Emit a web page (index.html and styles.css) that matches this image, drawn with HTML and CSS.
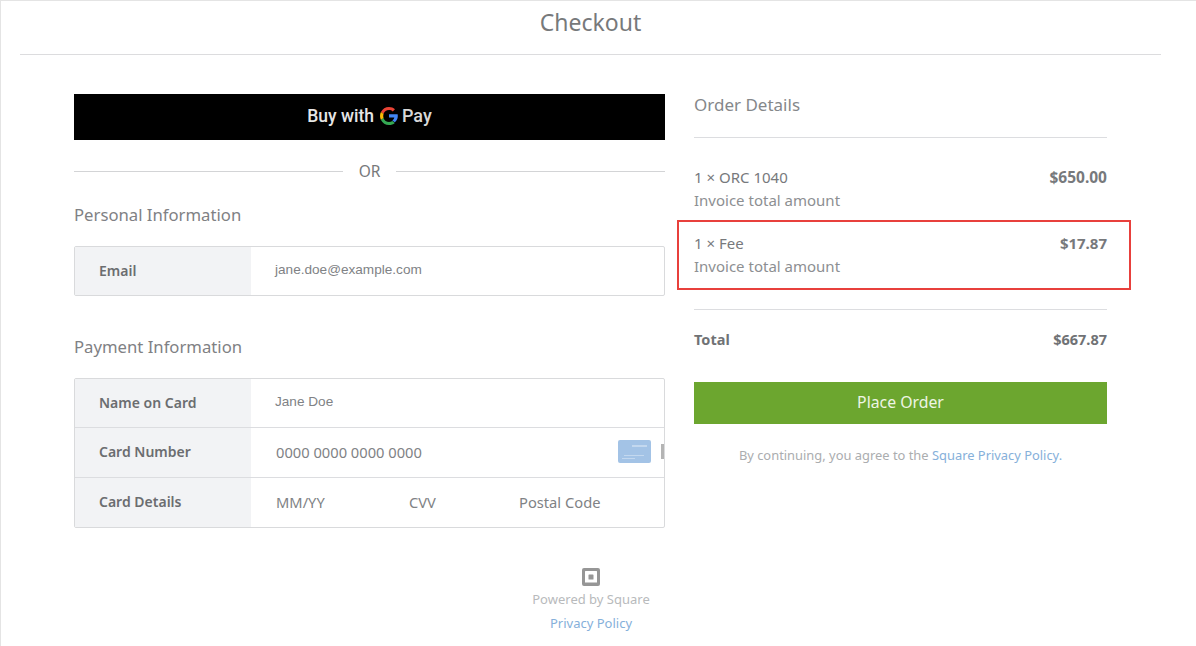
FILE: index.html
```html
<!DOCTYPE html>
<html lang="en">
<head>
<meta charset="utf-8">
<title>Checkout</title>
<link rel="stylesheet" href="styles.css">
</head>
<body>
<div class="page">
  <header class="header"><h1 class="title">Checkout</h1></header>
  <main class="columns">
    <section class="left">
      <button class="gpay">Buy with
        <svg class="g-logo" viewBox="2 2 44 44" width="18" height="18" aria-hidden="true">
          <path fill="#EA4335" d="M24 9.500c3.500 0 6.700 1.200 9.200 3.600l5.400-5.400C34.700 4 29.800 2 24 2 15.400 2 8 6.900 4.400 14.100l6.300 4.900C12.500 13.400 17.800 9.500 24 9.500z"/>
          <path fill="#4285F4" d="M45.500 24.500c0-1.600-.1-3.100-.4-4.500H24v7.500h12.900c-.6 3-2.200 5.500-4.700 7.200l6 4.700C42.800 35.500 45.500 30.500 45.500 24.500z"/>
          <path fill="#FBBC05" d="M10.700 28.600c-.5-1.400-.8-3-.8-4.600s.3-3.200.8-4.600l-6.300-4.900C2.900 17.400 2 20.600 2 24s.9 6.600 2.400 9.500l6.300-4.900z"/>
          <path fill="#34A853" d="M24 46c5.800 0 10.400-1.900 14.200-5.100l-6-4.700c-2.200 1.500-4.900 2.300-8.200 2.300-6.200 0-11.500-4-13.300-9.900l-6.300 4.900C8 41.100 15.400 46 24 46z"/>
        </svg>
        <span class="pay">Pay</span>
      </button>
      <div class="or"><span class="or-line"></span><span class="or-text">OR</span><span class="or-line"></span></div>

      <h2 class="section-title first">Personal Information</h2>
      <div class="table">
        <div class="row">
          <div class="label">Email</div>
          <div class="value small">jane.doe@example.com</div>
        </div>
      </div>

      <h2 class="section-title second">Payment Information</h2>
      <div class="table">
        <div class="row">
          <div class="label">Name on Card</div>
          <div class="value small">Jane Doe</div>
        </div>
        <div class="row">
          <div class="label">Card Number</div>
          <div class="value number">
            <span>0000 0000 0000 0000</span>
            <span class="card-icon"></span>
            <span class="card-peek"></span>
          </div>
        </div>
        <div class="row">
          <div class="label">Card Details</div>
          <div class="value details">
            <span class="mm">MM/YY</span>
            <span class="cvv">CVV</span>
            <span>Postal Code</span>
          </div>
        </div>
      </div>
    </section>

    <aside class="right">
      <h2 class="order-title">Order Details</h2>
      <div class="item first-item">
        <div class="item-line"><span>1 × ORC 1040</span><b>$650.00</b></div>
        <div class="item-sub">Invoice total amount</div>
      </div>
      <div class="item fee">
        <div class="item-line"><span>1 × Fee</span><b>$17.87</b></div>
        <div class="item-sub">Invoice total amount</div>
        <div class="highlight"></div>
      </div>
      <div class="total"><b>Total</b><b>$667.87</b></div>
      <button class="place">Place Order</button>
      <p class="agree">By continuing, you agree to the <a class="link">Square Privacy Policy.</a></p>
    </aside>
  </main>
  <footer class="footer">
    <svg class="sq-logo" viewBox="0 0 20 20" width="20" height="20" aria-hidden="true">
      <path fill="#969696" fill-rule="evenodd" d="M3 1h14a2 2 0 0 1 2 2v14a2 2 0 0 1-2 2H3a2 2 0 0 1-2-2V3a2 2 0 0 1 2-2zm1 3.500v11h12v-11a.5.5 0 0 0-.5-.5h-11a.5.5 0 0 0-.5.5z"/>
      <rect x="7.500" y="7.500" width="5" height="5" rx=".6" fill="#969696"/>
    </svg>
    <div class="powered">Powered by Square</div>
    <a class="link privacy">Privacy Policy</a>
  </footer>
</div>
</body>
</html>
```
FILE: styles.css
```css
* { box-sizing: border-box; }
html, body { margin: 0; padding: 0; }
body {
  width: 1196px;
  height: 646px;
  overflow: hidden;
  background: #fff;
  font-family: "Noto Sans", "Open Sans", sans-serif;
  color: #6f7173;
}
.page {
  height: 646px;
  border-left: 1px solid #e4e4e4;
  border-top: 1px solid #e4e4e4;
  display: flex;
  flex-direction: column;
}
.header {
  margin: 0 35px 0 19px;
  height: 54px;
  border-bottom: 1px solid #dcdcde;
  text-align: center;
}
.title {
  margin: 0;
  padding-top: 5px;
  font-size: 23px;
  line-height: 33px;
  font-weight: 400;
  color: #77797b;
}
.columns {
  display: flex;
  padding: 39px 0 0 73px;
  gap: 29px;
}
.left { width: 591px; }
.right { width: 413px; }
.gpay {
  display: flex;
  align-items: center;
  justify-content: center;
  width: 100%;
  height: 46px;
  border: 0;
  background: #000;
  color: #e6e6e6;
  font: 500 17.500px "Roboto", sans-serif;
  padding: 0 0 3px;
}
.g-logo { margin: 0 4px 0 6px; }
.pay { font-size: 18px; color: #d8d8d8; }
.or {
  display: flex;
  align-items: center;
  gap: 16px;
  height: 62px;
  padding-bottom: 1px;
}
.or-line { flex: 1; height: 1px; background: #d3d4d6; margin-top: 1px; }
.or-text { font-size: 15.500px; color: #77797b; }
.section-title {
  margin: 0;
  font-size: 16.700px;
  line-height: 24px;
  font-weight: 400;
  color: #7f8184;
}
.first { margin-top: 1px; margin-bottom: 19px; }
.second { margin-top: 39px; margin-bottom: 19px; }
.table {
  border: 1px solid #d9dadc;
  border-radius: 2px;
  overflow: hidden;
}
.row {
  display: flex;
  height: 50px;
  border-top: 1px solid #dcdde0;
}
.row:first-child { height: 48px; border-top: 0; }
.label {
  width: 176px;
  background: #f2f3f5;
  padding: 0 0 2px 24px;
  display: flex;
  align-items: center;
  font-size: 14px;
  font-weight: 600;
  color: #6b6d70;
}
.value {
  flex: 1;
  display: flex;
  align-items: center;
  padding: 0 0 2px 25px;
  font-size: 14.700px;
  color: #808285;
}
.small { font-family: "Liberation Sans", sans-serif; font-size: 13.600px; padding-left: 24px; padding-bottom: 3px; }
.number { justify-content: space-between; padding-right: 0; }
.card-icon {
  margin-left: auto;
  width: 33px;
  height: 23px;
  border-radius: 2px;
  background:
    linear-gradient(#c3d8ef, #c3d8ef) 6px 15px / 20px 1px no-repeat,
    linear-gradient(#c3d8ef, #c3d8ef) 4px 18px / 13px 1px no-repeat,
    linear-gradient(#c3d8ef, #c3d8ef) 14px 5px / 15px 2px no-repeat,
    #a3c3e6;
}
.card-peek {
  width: 3px;
  height: 15px;
  margin: 0 0 0 10px;
  background: #b4b4b4;
}
.mm { width: 133px; }
.cvv { width: 110px; }
.order-title {
  margin: 0;
  padding-bottom: 21px;
  border-bottom: 1px solid #dcdde0;
  font-size: 17px;
  line-height: 22px;
  font-weight: 400;
  color: #85878a;
}
.item { font-size: 15px; line-height: 24px; }
.first-item { padding-top: 27px; }
.fee {
  position: relative;
  padding-top: 19px;
  padding-bottom: 31px;
  border-bottom: 1px solid #dcdde0;
}
.highlight {
  position: absolute;
  left: -17px;
  right: -24px;
  top: 8px;
  height: 70px;
  border: 2px solid #e8403c;
}
.item-line {
  display: flex;
  justify-content: space-between;
  color: #77797c;
}
.item-line b { font-weight: 700; }
.first-item b { font-size: 15.500px; }
.item-sub { color: #8d8f92; margin-top: -1px; }
.total {
  display: flex;
  justify-content: space-between;
  font-size: 14.500px;
  line-height: 24px;
  padding-top: 17px;
  color: #707275;
}
.place {
  display: block;
  width: 100%;
  height: 42px;
  margin-top: 31px;
  border: 0;
  background: #6ca62f;
  color: #eef5e4;
  font: 400 15.800px "Noto Sans", sans-serif;
  padding: 0 0 3px;
}
.agree {
  margin: 22px 0 0;
  text-align: center;
  font-size: 12.900px;
  line-height: 18px;
  color: #abadaf;
}
.link { color: #86b0da; }
.footer {
  margin-top: 39px;
  margin-right: 15px;
  display: flex;
  flex-direction: column;
  align-items: center;
}
.sq-logo { display: block; }
.powered {
  margin-top: 3px;
  font-size: 13px;
  line-height: 18px;
  color: #b8babc;
}
.privacy {
  margin-top: 6px;
  font-size: 13px;
  line-height: 18px;
}
```
